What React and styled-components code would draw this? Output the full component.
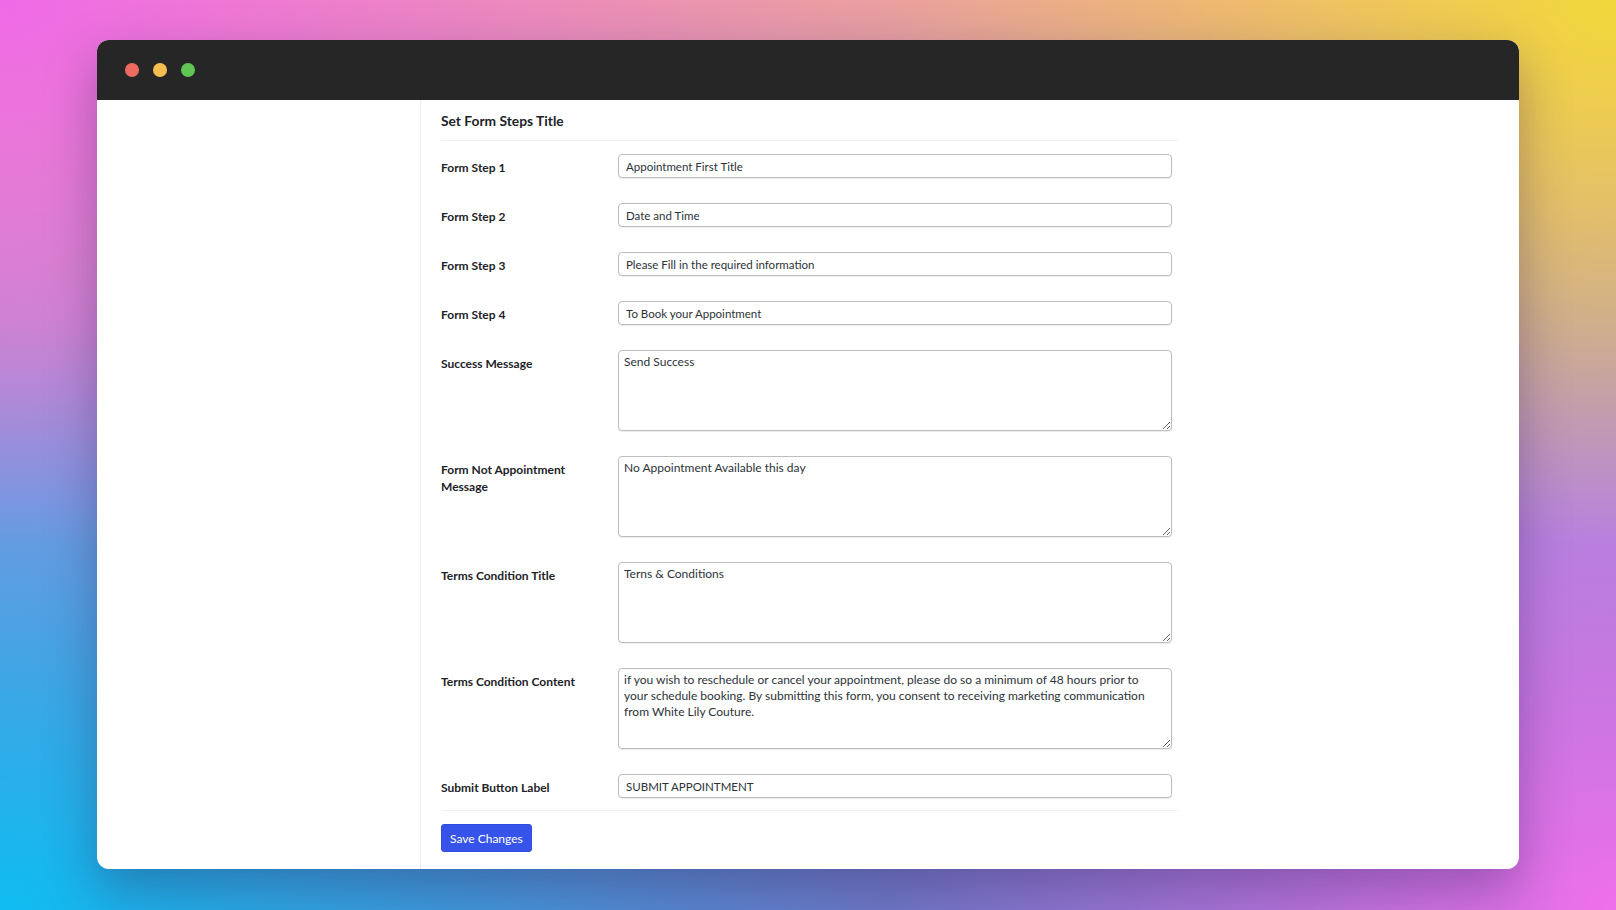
import React from 'react';
import styled, { createGlobalStyle } from 'styled-components';

const GlobalStyle = createGlobalStyle`
  html, body {
    margin: 0;
    padding: 0;
    height: 100%;
  }
  body {
    font-family: Lato, "Noto Sans", sans-serif;
    overflow: hidden;
  }
`;

const Backdrop = styled.div`
  width: 1616px;
  height: 910px;
  box-sizing: border-box;
  padding: 40px 97px 41px;
  display: flex;
  background:
    radial-gradient(ellipse 55% 60% at 0% 0%, #f06ae8 0%, rgba(240, 106, 232, 0) 100%),
    radial-gradient(ellipse 45% 60% at 100% 0%, #f2d83a 0%, rgba(242, 216, 58, 0) 100%),
    radial-gradient(ellipse 55% 65% at 0% 100%, #0fbdf2 0%, rgba(15, 189, 242, 0) 100%),
    radial-gradient(ellipse 45% 65% at 100% 100%, #f070ec 0%, rgba(240, 112, 236, 0) 100%),
    linear-gradient(180deg, #eaa09e 0%, #9c8ad8 55%, #6f78c8 100%);
`;

const Window = styled.div`
  flex: 1;
  display: flex;
  flex-direction: column;
  background: #ffffff;
  border-radius: 12px;
  overflow: hidden;
  box-shadow: 0 20px 50px rgba(40, 30, 80, 0.35);
`;

const TitleBar = styled.div`
  height: 60px;
  flex-shrink: 0;
  background: #262626;
  display: flex;
  align-items: center;
  gap: 14px;
  padding: 0 0 0 28px;
`;

const Dot = styled.span`
  width: 14px;
  height: 14px;
  border-radius: 50%;
  background: ${(p) => p.color};
`;

const Body = styled.div`
  flex: 1;
  display: flex;
  min-height: 0;
`;

const Sidebar = styled.div`
  width: 323px;
  flex-shrink: 0;
  border-right: 1px solid #ededed;
`;

const Main = styled.div`
  padding: 0 0 0 20px;
`;

const Form = styled.form`
  width: 737px;
`;

const Heading = styled.h2`
  margin: 0;
  padding: 11px 0 9px;
  line-height: 20px;
  font-size: 13.8px;
  font-weight: 700;
  color: #1d2327;
  border-bottom: 1px solid #f0f0f1;
`;

const Row = styled.div`
  display: grid;
  grid-template-columns: 177px 554px;
  padding: 13px 0 12px;
`;

const Label = styled.label`
  display: block;
  width: 140px;
  padding-top: 5px;
  font-size: 12px;
  line-height: 17px;
  font-weight: 700;
  color: #1d2327;
`;

const TextInput = styled.input`
  box-sizing: border-box;
  width: 100%;
  height: 24px;
  margin: 0;
  padding: 0 7px;
  border: 1px solid #bdbdbd;
  border-radius: 4px;
  box-shadow: 0 1px 1px rgba(0, 0, 0, 0.08);
  font-family: Lato, "Noto Sans", sans-serif;
  font-size: 11.5px;
  color: #2c3338;
  background: #fff;
  outline: none;
`;

const TextArea = styled.textarea`
  box-sizing: border-box;
  display: block;
  width: 100%;
  height: 81px;
  margin: 0;
  padding: 3px 5px 2px;
  border: 1px solid #bdbdbd;
  border-radius: 4px;
  box-shadow: 0 1px 1px rgba(0, 0, 0, 0.08);
  font-family: Lato, "Noto Sans", sans-serif;
  font-size: 12px;
  line-height: 16px;
  color: #2c3338;
  background: #fff;
  resize: vertical;
  outline: none;
`;

const Footer = styled.div`
  border-top: 1px solid #f0f0f1;
  padding-top: 13px;
`;

const SaveButton = styled.button`
  height: 28px;
  padding: 0 8px;
  border: 1px solid #2f4de0;
  border-radius: 3px;
  background: #3654ea;
  color: #ffffff;
  font-family: Lato, "Noto Sans", sans-serif;
  font-size: 12px;
  cursor: pointer;
`;

const fields = [
  { label: 'Form Step 1', value: 'Appointment First Title' },
  { label: 'Form Step 2', value: 'Date and Time' },
  { label: 'Form Step 3', value: 'Please Fill in the required information' },
  { label: 'Form Step 4', value: 'To Book your Appointment' },
  { label: 'Success Message', value: 'Send Success', multi: true },
  { label: 'Form Not Appointment Message', value: 'No Appointment Available this day', multi: true },
  { label: 'Terms Condition Title', value: 'Terns & Conditions', multi: true },
  {
    label: 'Terms Condition Content',
    value:
      'if you wish to reschedule or cancel your appointment, please do so a minimum of 48 hours prior to\nyour schedule booking. By submitting this form, you consent to receiving marketing communication\nfrom White Lily Couture.',
    multi: true,
  },
  { label: 'Submit Button Label', value: 'SUBMIT APPOINTMENT' },
];

export default function App() {
  return (
    <>
      <GlobalStyle />
      <Backdrop>
        <Window>
          <TitleBar>
            <Dot color="#ee6a5f" />
            <Dot color="#f5bf4f" />
            <Dot color="#61c554" />
          </TitleBar>
          <Body>
            <Sidebar />
            <Main>
              <Form onSubmit={(e) => e.preventDefault()}>
                <Heading>Set Form Steps Title</Heading>
                {fields.map((f, i) => (
                  <Row key={i}>
                    <Label htmlFor={`field-${i}`}>{f.label}</Label>
                    {f.multi ? (
                      <TextArea id={`field-${i}`} defaultValue={f.value} />
                    ) : (
                      <TextInput id={`field-${i}`} type="text" defaultValue={f.value} />
                    )}
                  </Row>
                ))}
                <Footer>
                  <SaveButton type="submit">Save Changes</SaveButton>
                </Footer>
              </Form>
            </Main>
          </Body>
        </Window>
      </Backdrop>
    </>
  );
}
